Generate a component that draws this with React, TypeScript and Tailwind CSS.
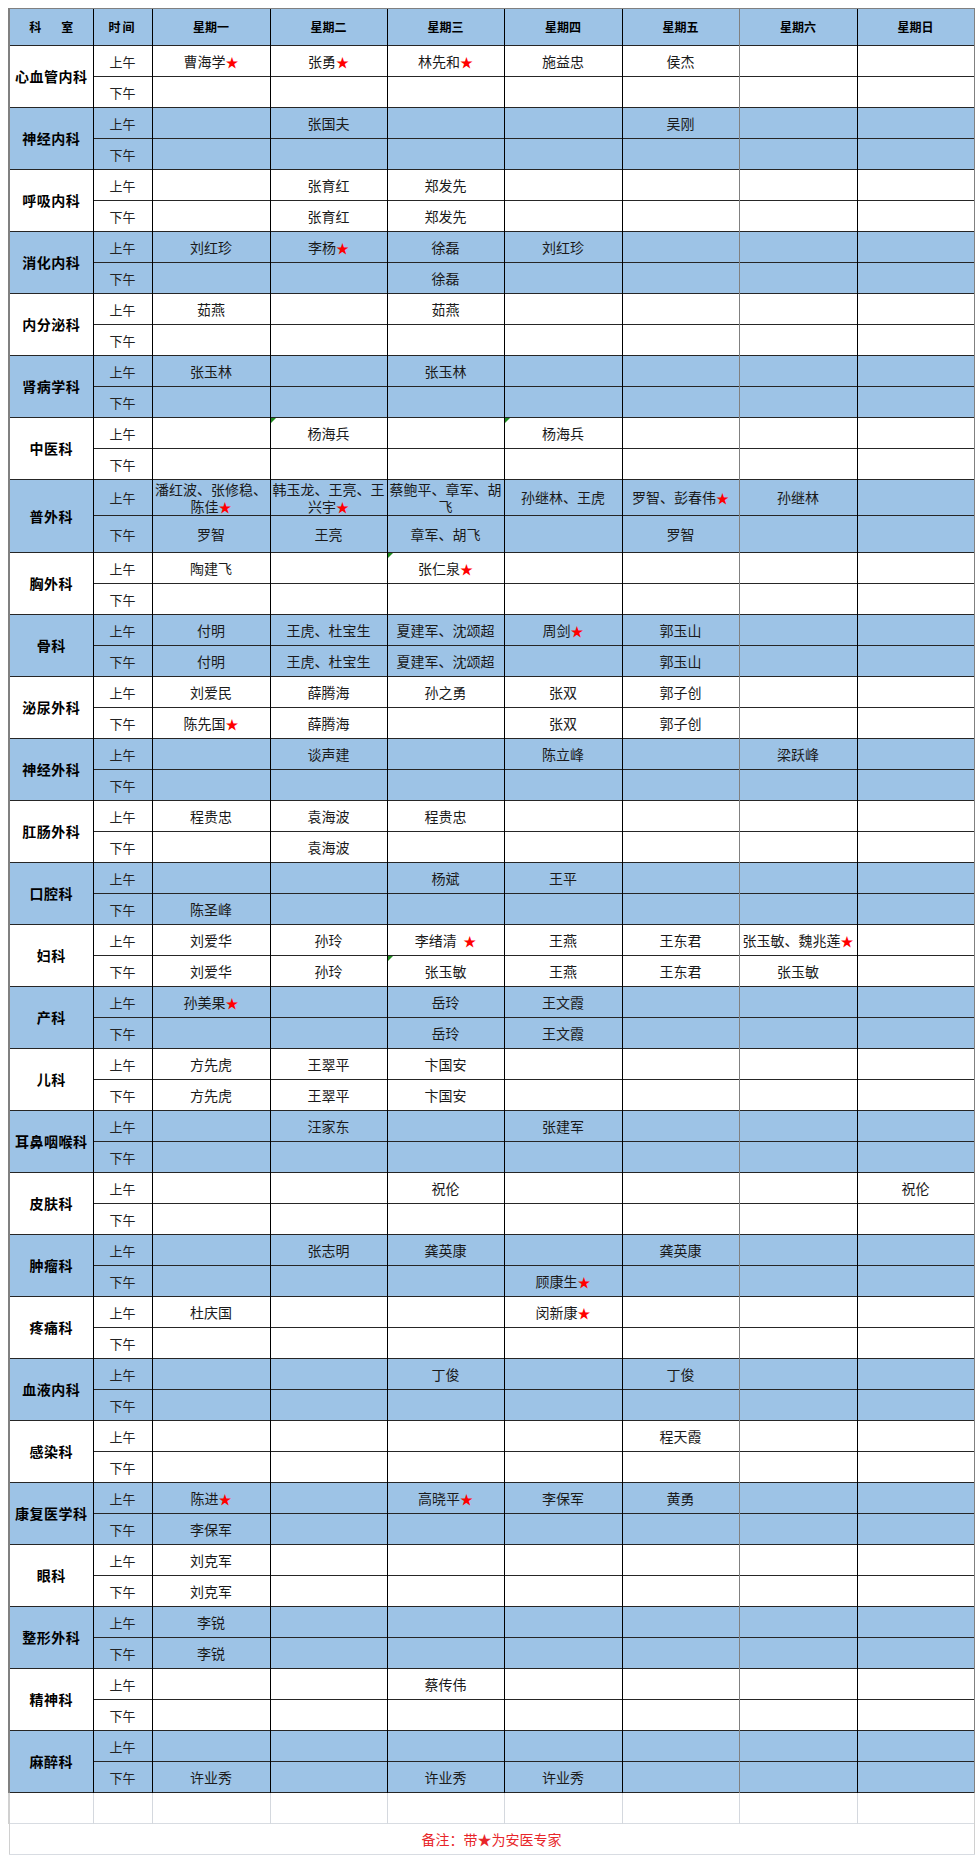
type Dept = { name: string; am: string[]; pm: string[]; tall?: boolean };

const e = ['', '', '', '', '', '', ''];

const depts: Dept[] = [
  { name: '心血管内科', am: ['曹海学★', '张勇★', '林先和★', '施益忠', '侯杰', '', ''], pm: e },
  { name: '神经内科', am: ['', '张国夫', '', '', '吴刚', '', ''], pm: e },
  { name: '呼吸内科', am: ['', '张育红', '郑发先', '', '', '', ''], pm: ['', '张育红', '郑发先', '', '', '', ''] },
  { name: '消化内科', am: ['刘红珍', '李杨★', '徐磊', '刘红珍', '', '', ''], pm: ['', '', '徐磊', '', '', '', ''] },
  { name: '内分泌科', am: ['茹燕', '', '茹燕', '', '', '', ''], pm: e },
  { name: '肾病学科', am: ['张玉林', '', '张玉林', '', '', '', ''], pm: e },
  { name: '中医科', am: ['', '杨海兵', '', '杨海兵', '', '', ''], pm: e },
  {
    name: '普外科',
    tall: true,
    am: ['潘红波、张修稳、陈佳★', '韩玉龙、王亮、王兴宇★', '蔡鲍平、章军、胡飞', '孙继林、王虎', '罗智、彭春伟★', '孙继林', ''],
    pm: ['罗智', '王亮', '章军、胡飞', '', '罗智', '', ''],
  },
  { name: '胸外科', am: ['陶建飞', '', '张仁泉★', '', '', '', ''], pm: e },
  {
    name: '骨科',
    am: ['付明', '王虎、杜宝生', '夏建军、沈颂超', '周剑★', '郭玉山', '', ''],
    pm: ['付明', '王虎、杜宝生', '夏建军、沈颂超', '', '郭玉山', '', ''],
  },
  {
    name: '泌尿外科',
    am: ['刘爱民', '薛腾海', '孙之勇', '张双', '郭子创', '', ''],
    pm: ['陈先国★', '薛腾海', '', '张双', '郭子创', '', ''],
  },
  { name: '神经外科', am: ['', '谈声建', '', '陈立峰', '', '梁跃峰', ''], pm: e },
  { name: '肛肠外科', am: ['程贵忠', '袁海波', '程贵忠', '', '', '', ''], pm: ['', '袁海波', '', '', '', '', ''] },
  { name: '口腔科', am: ['', '', '杨斌', '王平', '', '', ''], pm: ['陈圣峰', '', '', '', '', '', ''] },
  {
    name: '妇科',
    am: ['刘爱华', '孙玲', '李绪清  ★', '王燕', '王东君', '张玉敏、魏兆莲★', ''],
    pm: ['刘爱华', '孙玲', '张玉敏', '王燕', '王东君', '张玉敏', ''],
  },
  { name: '产科', am: ['孙美果★', '', '岳玲', '王文霞', '', '', ''], pm: ['', '', '岳玲', '王文霞', '', '', ''] },
  { name: '儿科', am: ['方先虎', '王翠平', '卞国安', '', '', '', ''], pm: ['方先虎', '王翠平', '卞国安', '', '', '', ''] },
  { name: '耳鼻咽喉科', am: ['', '汪家东', '', '张建军', '', '', ''], pm: e },
  { name: '皮肤科', am: ['', '', '祝伦', '', '', '', '祝伦'], pm: e },
  { name: '肿瘤科', am: ['', '张志明', '龚英康', '', '龚英康', '', ''], pm: ['', '', '', '顾康生★', '', '', ''] },
  { name: '疼痛科', am: ['杜庆国', '', '', '闵新康★', '', '', ''], pm: e },
  { name: '血液内科', am: ['', '', '丁俊', '', '丁俊', '', ''], pm: e },
  { name: '感染科', am: ['', '', '', '', '程天霞', '', ''], pm: e },
  { name: '康复医学科', am: ['陈进★', '', '高晓平★', '李保军', '黄勇', '', ''], pm: ['李保军', '', '', '', '', '', ''] },
  { name: '眼科', am: ['刘克军', '', '', '', '', '', ''], pm: ['刘克军', '', '', '', '', '', ''] },
  { name: '整形外科', am: ['李锐', '', '', '', '', '', ''], pm: ['李锐', '', '', '', '', '', ''] },
  { name: '精神科', am: ['', '', '蔡传伟', '', '', '', ''], pm: e },
  { name: '麻醉科', am: e, pm: ['许业秀', '', '许业秀', '许业秀', '', '', ''] },
];

const days = ['星期一', '星期二', '星期三', '星期四', '星期五', '星期六', '星期日'];
const widths = [84, 59, 118, 117, 117, 118, 117, 118, 117];

// little green corner marks left over from the spreadsheet
const marks = new Set(['中医科-am-1', '中医科-am-3', '胸外科-am-2', '妇科-pm-2']);

function Name({ text }: { text: string }) {
  if (!text) return null;
  const star = text.endsWith('★');
  const base = star ? text.slice(0, -1) : text;
  return (
    <>
      {base}
      {star ? <span className="text-[13px] text-[#ff0000]">★</span> : null}
    </>
  );
}

function dayBorder(i: number) {
  const left = i === 5 ? 'border-l-[#808080]' : 'border-l-black';
  const right = i === 6 ? ' border-r border-r-[#808080]' : '';
  return `border-l border-t border-t-[#262626] ${left}${right}`;
}

export default function App() {
  return (
    <div className="min-h-[1862px] bg-white px-2 pt-2 font-['Noto_Sans_CJK_SC',sans-serif] text-[#1a1a1a]">
      <table className="w-[965px] table-fixed border-collapse">
        <colgroup>
          {widths.map((w, i) => (
            <col key={i} style={{ width: w }} />
          ))}
        </colgroup>
        <thead>
          <tr className="h-[37px] bg-[#9dc3e6] text-[12px] font-bold text-black">
            <th className="border-l-2 border-t border-l-[#808080] border-t-[#808080] font-bold">
              科<span className="ml-[20px]">室</span>
            </th>
            <th className="border-l border-t border-l-black border-t-[#808080] font-bold tracking-[2px]">时间</th>
            {days.map((d, i) => (
              <th
                key={d}
                className={`border-t border-t-[#808080] font-bold ${i === 5 ? 'border-l border-l-[#808080]' : 'border-l border-l-black'} ${i === 6 ? 'border-r border-r-[#808080]' : ''}`}
              >
                {d}
              </th>
            ))}
          </tr>
        </thead>
        <tbody className="text-center text-[14px] leading-[17px]">
          {depts.map((d, di) => {
            const bg = di % 2 === 1 ? 'bg-[#9dc3e6]' : 'bg-white';
            return (['am', 'pm'] as const).map((half, hi) => {
              const h = d.tall ? (hi === 0 ? 'h-[36px]' : 'h-[37px]') : 'h-[31px]';
              return (
                <tr key={`${d.name}-${half}`} className={`${h} ${bg}`}>
                  {hi === 0 ? (
                    <td
                      rowSpan={2}
                      className="border-l-2 border-t border-l-[#808080] border-t-[#262626] text-[14px] font-bold tracking-[0.5px] text-black"
                    >
                      {d.name}
                    </td>
                  ) : null}
                  <td className="border-l border-t border-l-black border-t-[#262626] text-[13px] text-[#222]">
                    {half === 'am' ? '上午' : '下午'}
                  </td>
                  {d[half].map((t, i) => (
                    <td key={i} className={`relative whitespace-pre-wrap px-[1px] ${dayBorder(i)}`}>
                      {marks.has(`${d.name}-${half}-${i}`) ? (
                        <span className="absolute left-0 top-0 h-0 w-0 border-r-[5px] border-t-[5px] border-r-transparent border-t-[#1e8a1e]" />
                      ) : null}
                      <Name text={t} />
                    </td>
                  ))}
                </tr>
              );
            });
          })}
          <tr className="h-[31px] bg-white">
            <td className="border-l-2 border-t border-l-[#d0d0d0] border-t-[#262626]" />
            {widths.slice(1).map((_, i) => (
              <td
                key={i}
                className={`border-l border-t border-l-[#d4d8de] border-t-[#262626] ${i === 7 ? 'border-r border-r-[#d0d0d0]' : ''}`}
              />
            ))}
          </tr>
          <tr className="h-[31px] bg-white">
            <td
              colSpan={9}
              className="border-x border-y border-x-[#d0d0d0] border-y-[#d8dce2] text-[14px] text-[#e8262a]"
            >
              备注：带★为安医专家
            </td>
          </tr>
        </tbody>
      </table>
    </div>
  );
}
